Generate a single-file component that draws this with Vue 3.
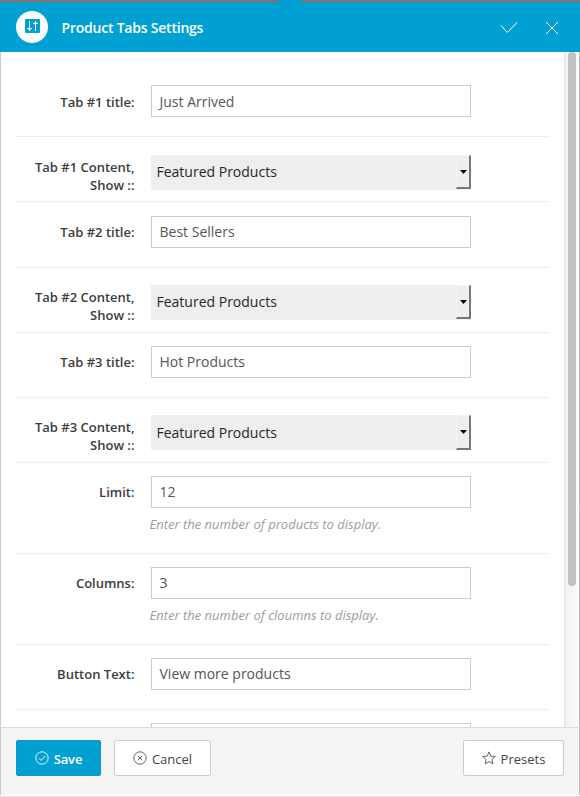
<script setup>
import { ref } from 'vue'

const rows = ref([
  { label: 'Tab #1 title:', type: 'text', value: 'Just Arrived', extra: 'first' },
  { label: 'Tab #1 Content, Show ::', type: 'select', value: 'Featured Products', extra: 'low' },
  { label: 'Tab #2 title:', type: 'text', value: 'Best Sellers', extra: 'tall' },
  { label: 'Tab #2 Content, Show ::', type: 'select', value: 'Featured Products' },
  { label: 'Tab #3 title:', type: 'text', value: 'Hot Products' },
  { label: 'Tab #3 Content, Show ::', type: 'select', value: 'Featured Products', extra: 'third' },
  { label: 'Limit:', type: 'text', value: '12', hint: 'Enter the number of products to display.' },
  { label: 'Columns:', type: 'text', value: '3', hint: 'Enter the number of cloumns to display.' },
  { label: 'Button Text:', type: 'text', value: 'View more products' },
  { label: '', type: 'text', value: '' }
])
</script>

<template>
  <div class="modal">
    <div class="backdrop"><span class="notch"></span></div>
    <header class="header">
      <span class="badge">
        <svg width="15" height="14" viewBox="0 0 15 14">
          <rect width="15" height="14" rx="1" fill="#00a0d2" />
          <path d="M4.500 2v10M10.500 2v10M2 9.500h5M8 4.500h5" fill="none" stroke="#fff" stroke-width="1" />
          <path d="M3 10h3v1H3zM9 3h3v1H9z" fill="#fff" opacity="0.5" />
        </svg>
      </span>
      <h1 class="title">Product Tabs Settings</h1>
      <svg class="check" width="18" height="14" viewBox="0 0 18 14"><path d="M1 4.500L7.300 11.500L17 1.500" /></svg>
      <svg class="close" width="14" height="14" viewBox="0 0 14 14"><path d="M1 1L13 13M13 1L1 13" /></svg>
    </header>
    <div class="body">
      <main class="form">
        <div v-for="(row, i) in rows" :key="i" class="row" :class="[row.type, row.extra, { hinted: row.hint }]">
          <label class="label">{{ row.label }}</label>
          <div class="control">
            <input v-if="row.type === 'text'" v-model="row.value" class="input" type="text" />
            <div v-else class="dropdown">
              <span class="value">{{ row.value }}</span>
              <span class="arrow"><svg width="7" height="4" viewBox="0 0 7 4"><path d="M0 0h7L3.500 4z" /></svg></span>
            </div>
            <p v-if="row.hint" class="hint">{{ row.hint }}</p>
          </div>
        </div>
      </main>
      <div class="track"><div class="thumb"></div></div>
    </div>
    <footer class="footer">
      <button class="btn primary">
        <svg width="14" height="14" viewBox="0 0 14 14"><circle cx="7" cy="7" r="6.200" /><path d="M3.800 7.200L6 9.400L10.300 4.900" /></svg>
        <span>Save</span>
      </button>
      <button class="btn cancel">
        <svg width="14" height="14" viewBox="0 0 14 14"><circle cx="7" cy="7" r="6.200" /><path d="M4.700 4.700L9.300 9.300M9.300 4.700L4.700 9.300" /></svg>
        <span>Cancel</span>
      </button>
      <button class="btn presets">
        <svg width="14" height="14" viewBox="0 0 14 14"><path d="M7 .9L8.800 5.100L13.300 5.500L9.900 8.500L10.900 12.900L7 10.600L3.100 12.900L4.100 8.500L.7 5.500L5.200 5.100Z" /></svg>
        <span>Presets</span>
      </button>
    </footer>
    <div class="bottom"></div>
  </div>
</template>

<style>
body {
  overflow: hidden;
  background: #fff;
}
</style>

<style scoped>
.modal,
.modal * {
  box-sizing: border-box;
}
.modal {
  width: 580px;
  height: 797px;
  display: flex;
  flex-direction: column;
  font-family: "Open Sans", sans-serif;
  color: #3c3c3c;
}
.backdrop {
  height: 2px;
  background: #777;
  flex: none;
}
.notch {
  display: block;
  width: 24px;
  height: 2px;
  margin-left: 278px;
  background: #00a0d2;
  border-radius: 2px 2px 0 0;
}
.header {
  height: 50px;
  flex: none;
  display: flex;
  align-items: center;
  padding: 0 21px 0 16px;
  background: linear-gradient(90deg, transparent 278px, #00a0d2 278px, #00a0d2 302px, transparent 302px), linear-gradient(#2b94b6 1px, #00a0d2 1px);
}
.badge {
  width: 32px;
  height: 32px;
  display: flex;
  align-items: center;
  justify-content: center;
  padding: 0 0 2px 1px;
  border-radius: 50%;
  background: #fff;
}
.title {
  margin: 0 auto 0 13.5px;
  font-size: 14px;
  line-height: 20px;
  font-weight: 600;
  letter-spacing: -0.22px;
  padding-top: 1px;
  color: #fff;
}
.header svg.check,
.header svg.close {
  fill: none;
  stroke: #fff;
  stroke-width: 1;
  margin-top: 2px;
}
.check {
  margin-right: 27px;
}
.body {
  height: 675px;
  flex: none;
  display: flex;
  overflow: hidden;
  border-left: 1px solid #ccc;
}
.form {
  width: 563px;
  flex: none;
  padding: 20px 15px 0;
}
.row {
  height: 65px;
  display: flex;
  padding-top: 13px;
  border-bottom: 1px solid #ededed;
}
.row.select {
  padding-top: 17px;
}
.row.low {
  padding-top: 18px;
}
.row.tall {
  height: 66px;
  padding-top: 14px;
}
.row.hinted {
  height: 91px;
}
.label {
  width: 118.500px;
  flex: none;
  margin-right: 16.500px;
  padding-top: 7px;
  font-size: 13px;
  line-height: 18px;
  font-weight: 600;
  text-align: right;
}
.first .label {
  padding-top: 8px;
}
.select .label {
  padding: 3px 0 0 10px;
}
.control {
  width: 320px;
}
.input {
  display: block;
  width: 320px;
  height: 32px;
  margin: 0;
  padding: 0 5px 2px 4.500px;
  border: 1px solid #ccc;
  border-radius: 0;
  outline: 0;
  background: #fff;
  color: #555;
  font: 14px "Open Sans", sans-serif;
  text-indent: 3px;
}
.first .input {
  padding-bottom: 0;
}
.dropdown {
  height: 35px;
  display: flex;
  justify-content: space-between;
  background: #eee;
  color: #282828;
  font-size: 14px;
  line-height: 34px;
  padding-bottom: 1px;
}
.value {
  padding-left: 5.500px;
}
.third .value {
  padding-top: 1px;
}
.third .dropdown {
  padding-bottom: 0;
}
.arrow {
  width: 15px;
  display: flex;
  align-items: center;
  justify-content: center;
  border: solid;
  border-width: 1px 2px 2px 1px;
  border-color: #f5f5f5 #777 #777 #f5f5f5;
}
.hint {
  margin: 7px 0 0 -1.500px;
  font-size: 13px;
  line-height: 18px;
  font-style: italic;
  color: #9c9c9c;
}
.track {
  width: 16px;
  flex: none;
  padding-left: 3px;
  background: linear-gradient(90deg, #f0f0f0, #fcfcfc);
  border-left: 1px solid #e4e4e4;
  border-right: 1px solid #bbb;
}
.thumb {
  width: 8px;
  height: 534px;
  border-radius: 4px;
  background: #c1c1c1;
}
.footer {
  height: 68px;
  flex: none;
  display: flex;
  align-items: flex-start;
  padding: 12px 15px 0;
  background: #f4f4f4;
  border: solid;
  border-width: 1px 1px 0;
  border-color: #ddd #bbb #ddd #ccc;
}
.btn {
  height: 36px;
  display: flex;
  align-items: center;
  justify-content: center;
  gap: 5px;
  padding: 1px 0 0;
  border: 1px solid #ccc;
  border-radius: 2px;
  background: #fff;
  color: #444;
  font: 13px "Open Sans", sans-serif;
}
.btn svg {
  fill: none;
  stroke: #555;
  stroke-width: 0.9;
  margin-top: -1px;
}
.primary {
  width: 85px;
  background: #00a0d2;
  border-color: #1595bd;
  color: #fff;
  font-weight: 600;
  letter-spacing: -0.15px;
}
.primary svg {
  stroke: #fff;
}
.cancel {
  width: 97px;
  margin-left: 13px;
}
.presets {
  width: 101px;
  margin-left: auto;
}
.bottom {
  height: 2px;
  flex: none;
  background: #fff;
  border-bottom: 1px solid #ddd;
}
</style>
